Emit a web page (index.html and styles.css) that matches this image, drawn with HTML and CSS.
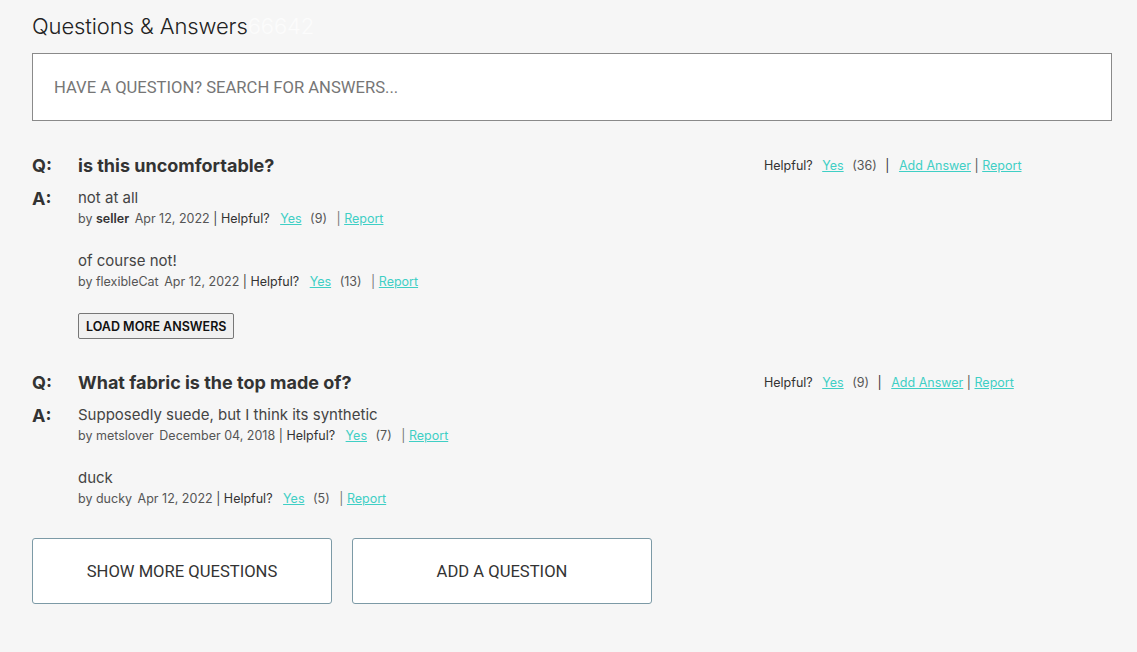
FILE: index.html
```html
<!DOCTYPE html>
<html lang="en">
<head>
<meta charset="utf-8">
<title>Questions &amp; Answers</title>
<link rel="stylesheet" href="styles.css">
</head>
<body>
<div class="qa">
  <h2 class="qa-title">Questions &amp; Answers<span class="ghost">66642</span></h2>
  <div class="search">HAVE A QUESTION? SEARCH FOR ANSWERS...</div>

  <div class="q-list">
    <div class="q-item">
      <div class="q-row">
        <span class="label">Q:</span>
        <span class="q-text">is this uncomfortable?</span>
        <span class="q-meta">Helpful? <a class="link yes">Yes</a> <span class="count">(36)</span> <span class="sep">|</span> <a class="link add">Add Answer</a> <span class="sep2">|</span> <a class="link">Report</a></span>
      </div>
      <div class="a-row">
        <span class="label a-label">A:</span>
        <div class="a-list">
          <div class="answer">
            <div class="a-text">not at all</div>
            <div class="a-meta">by <b>seller</b> <span class="date">Apr 12, 2022</span> <span class="bar">|</span> <span class="helpful">Helpful?</span> <a class="link yes">Yes</a> <span class="count">(9)</span> <span class="sep">|</span> <a class="link">Report</a></div>
          </div>
          <div class="answer">
            <div class="a-text">of course not!</div>
            <div class="a-meta">by flexibleCat <span class="date">Apr 12, 2022</span> <span class="bar">|</span> <span class="helpful">Helpful?</span> <a class="link yes">Yes</a> <span class="count">(13)</span> <span class="sep">|</span> <a class="link">Report</a></div>
          </div>
          <button class="load-more">LOAD MORE ANSWERS</button>
        </div>
      </div>
    </div>

    <div class="q-item">
      <div class="q-row">
        <span class="label">Q:</span>
        <span class="q-text">What fabric is the top made of?</span>
        <span class="q-meta">Helpful? <a class="link yes">Yes</a> <span class="count">(9)</span> <span class="sep">|</span> <a class="link add">Add Answer</a> <span class="sep2">|</span> <a class="link">Report</a></span>
      </div>
      <div class="a-row">
        <span class="label a-label">A:</span>
        <div class="a-list">
          <div class="answer">
            <div class="a-text">Supposedly suede, but I think its synthetic</div>
            <div class="a-meta">by metslover <span class="date">December 04, 2018</span> <span class="bar">|</span> <span class="helpful">Helpful?</span> <a class="link yes">Yes</a> <span class="count">(7)</span> <span class="sep">|</span> <a class="link">Report</a></div>
          </div>
          <div class="answer last">
            <div class="a-text">duck</div>
            <div class="a-meta">by ducky <span class="date">Apr 12, 2022</span> <span class="bar">|</span> <span class="helpful">Helpful?</span> <a class="link yes">Yes</a> <span class="count">(5)</span> <span class="sep">|</span> <a class="link">Report</a></div>
          </div>
        </div>
      </div>
    </div>
  </div>

  <div class="actions">
    <button class="big-btn">SHOW MORE QUESTIONS</button>
    <button class="big-btn">ADD A QUESTION</button>
  </div>
</div>
</body>
</html>
```

FILE: styles.css
```css
html, body {
  margin: 0;
  padding: 0;
  background: #f6f6f6;
}
body {
  font-family: Inter, "Noto Sans", sans-serif;
  color: #333;
}
.qa {
  padding: 12px 25px 0 32px;
}
.qa-title {
  margin: 0;
  font-size: 22px;
  font-weight: 300;
  line-height: 28px;
  color: #222;
  letter-spacing: -0.1px;
}
.ghost {
  color: #fcfcfc;
}
.search {
  margin-top: 13px;
  height: 66px;
  border: 1px solid #8a8a8a;
  background: #fff;
  display: flex;
  align-items: center;
  padding-left: 21px;
  font-family: Roboto, sans-serif;
  font-size: 16.6px;
  color: #767676;
}
.q-list {
  margin-top: 32px;
}
.q-item {
  margin-bottom: 20px;
}
.q-item + .q-item {
  margin-top: 27px;
}
.q-row {
  display: flex;
  align-items: center;
  height: 24px;
}
.label {
  width: 46px;
  flex: 0 0 46px;
  font-size: 18px;
  font-weight: 700;
  color: #333;
}
.q-text {
  flex: 0 0 686px;
  font-size: 18px;
  font-weight: 700;
  color: #333;
}
.q-meta {
  font-size: 12.5px;
  color: #333;
  white-space: nowrap;
}
.link {
  color: #3fcfc5;
  text-decoration: underline;
  cursor: pointer;
}
.q-meta .yes { margin-left: 6px; margin-right: 5px; }
.q-meta .sep { margin: 0 6px 0 5px; color: #333; }
.q-meta .sep2 { color: #555; }
.a-row {
  display: flex;
  margin-top: 10px;
}
.a-label {
  line-height: 24px;
  margin-top: 0;
}
.a-list {
  display: flex;
  flex-direction: column;
  align-items: flex-start;
}
.answer {
  margin-bottom: 21px;
}
.answer.last {
  margin-bottom: 0;
}
.a-text {
  font-size: 15px;
  line-height: 22px;
  color: #444;
}
.a-meta {
  font-size: 12.5px;
  line-height: 20px;
  color: #555;
  white-space: nowrap;
}
.a-meta b {
  font-weight: 600;
  color: #333;
}
.date { margin-left: 2px; }
.bar { color: #444; }
.helpful { color: #333; }
.a-meta .yes { margin-left: 7px; margin-right: 5px; }
.a-meta .sep { margin-left: 6px; color: #777; }
.count { color: #555; }
.load-more {
  font-family: Inter, sans-serif;
  font-size: 12.5px;
  font-weight: 600;
  color: #111;
  background: #f0f0f0;
  border: 1px solid #777;
  border-radius: 2px;
  padding: 3px 7px;
  height: 26px;
  margin-top: 0;
  margin-bottom: 4px;
}
.actions {
  display: flex;
  gap: 20px;
  margin-top: 29px;
}
.big-btn {
  width: 300px;
  height: 66px;
  background: #fff;
  border: 1px solid #7c9aa6;
  border-radius: 3px;
  font-family: Roboto, sans-serif;
  font-size: 16.6px;
  color: #333;
}
```
